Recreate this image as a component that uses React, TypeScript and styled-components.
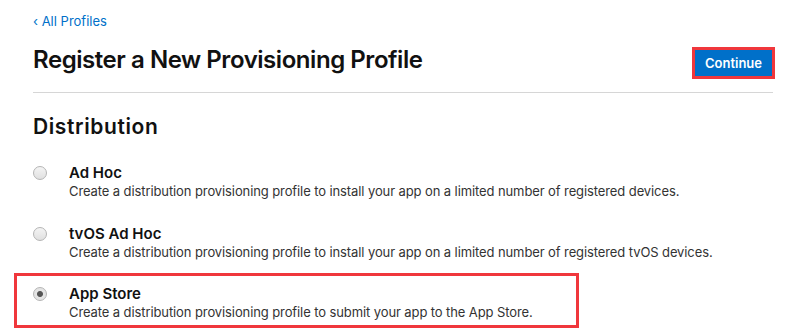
import React from "react";
import styled, { createGlobalStyle } from "styled-components";

const GlobalStyle = createGlobalStyle`
  body {
    margin: 0;
    background: #fff;
    font-family: Inter, "Noto Sans", "Liberation Sans", sans-serif;
    color: #111;
  }
`;

const options = [
  {
    id: "adhoc",
    title: "Ad Hoc",
    desc: "Create a distribution provisioning profile to install your app on a limited number of registered devices.",
  },
  {
    id: "tvos",
    title: "tvOS Ad Hoc",
    desc: "Create a distribution provisioning profile to install your app on a limited number of registered tvOS devices.",
  },
  {
    id: "appstore",
    title: "App Store",
    desc: "Create a distribution provisioning profile to submit your app to the App Store.",
  },
];

const App = () => {
  return (
    <Page>
      <GlobalStyle />
      <BackLink href="#">‹ All Profiles</BackLink>
      <Header>
        <Title>Register a New Provisioning Profile</Title>
        <Highlight>
          <ContinueButton>Continue</ContinueButton>
        </Highlight>
      </Header>
      <Section>
        <SectionTitle>Distribution</SectionTitle>
        <OptionList>
          {options.map((o) => (
            <Option key={o.id} highlighted={o.id === "appstore"}>
              <RadioCell>
                <Radio checked={o.id === "appstore"} />
              </RadioCell>
              <OptionText>
                <OptionTitle>{o.title}</OptionTitle>
                <OptionDesc>{o.desc}</OptionDesc>
              </OptionText>
            </Option>
          ))}
        </OptionList>
      </Section>
    </Page>
  );
};

export default App;

const Page = styled.div`
  width: 740px;
  padding: 13px 0 0 33px;
`;

const BackLink = styled.a`
  display: block;
  font-size: 13px;
  line-height: 16px;
  color: #0070c9;
  text-decoration: none;
`;

const Header = styled.div`
  display: flex;
  justify-content: space-between;
  align-items: flex-start;
  margin-top: 18px;
  padding-bottom: 13px;
  border-bottom: 1px solid #d6d6d6;
`;

const Title = styled.h1`
  margin: 0;
  font-size: 24px;
  line-height: 26px;
  font-weight: 600;
  letter-spacing: -0.45px;
  color: #111;
`;

const Highlight = styled.div`
  border: 3px solid #f0373c;
  margin-right: -2px;
`;

const ContinueButton = styled.button`
  display: block;
  width: 77px;
  height: 26px;
  border: none;
  background: #0070c9;
  color: #fff;
  font-family: Inter, "Noto Sans", "Liberation Sans", sans-serif;
  font-size: 13px;
  font-weight: 600;
  padding: 0;
`;

const Section = styled.div`
  padding-top: 21px;
`;

const SectionTitle = styled.h2`
  margin: 0;
  font-size: 21px;
  font-weight: 600;
  letter-spacing: 0.6px;
  line-height: 26px;
`;

const OptionList = styled.div`
  display: flex;
  flex-direction: column;
  gap: 25px;
  margin-top: 24px;
`;

const Option = styled.div<{ highlighted?: boolean }>`
  display: flex;
  align-items: flex-start;
  ${(p) =>
    p.highlighted
      ? `
    border: 3px solid #f0373c;
    margin: -13px 0 0 -19px;
    padding: 9px 0 4px 16px;
    width: 543px;
  `
      : ""}
`;

const RadioCell = styled.div`
  width: 36px;
  padding-top: 2px;
`;

const Radio = styled.span<{ checked?: boolean }>`
  display: block;
  width: 12px;
  height: 12px;
  border-radius: 50%;
  border: 1px solid #b5b5b5;
  background: ${(p) =>
    p.checked
      ? "radial-gradient(circle, #555 0 2.5px, #e4e4e4 3.5px)"
      : "linear-gradient(#f4f4f4, #e0e0e0)"};
`;

const OptionText = styled.div`
  display: flex;
  flex-direction: column;
`;

const OptionTitle = styled.div`
  font-size: 15px;
  font-weight: 600;
  line-height: 18px;
  color: #111;
`;

const OptionDesc = styled.div`
  font-size: 13px;
  line-height: 18px;
  letter-spacing: -0.1px;
  color: #333;
`;
